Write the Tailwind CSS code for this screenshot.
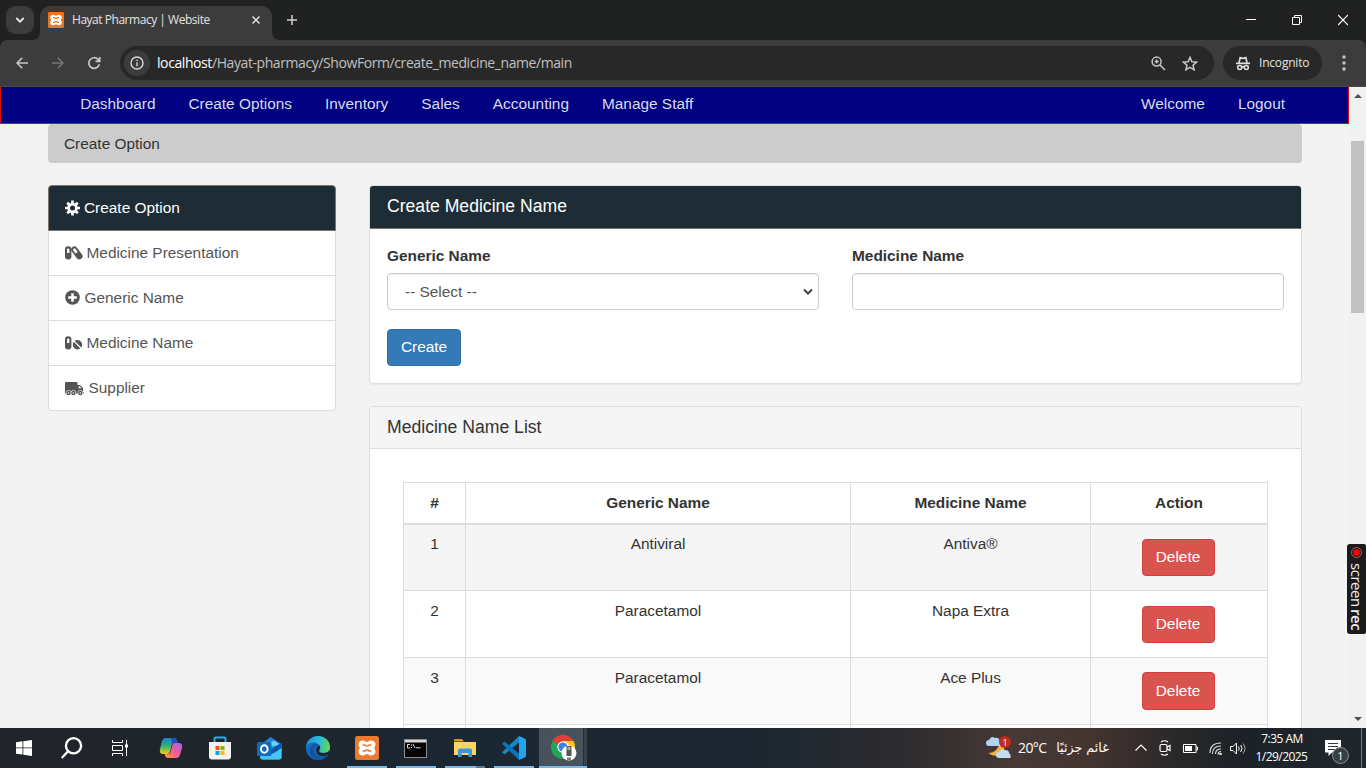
<!DOCTYPE html>
<html lang="en">
<head>
<meta charset="utf-8">
<title>Hayat Pharmacy | Website</title>
<script src="https://cdn.jsdelivr.net/npm/@tailwindcss/browser@4"></script>
</head>
<body class="relative flex h-[768px] w-[1366px] flex-col overflow-hidden bg-[#f3f3f3] font-['Liberation_Sans',Arial,sans-serif] text-[15.4px] leading-[22px] text-[#333]">

<!-- Browser tab strip -->
<header class="h-[87px] shrink-0 bg-[#202221] font-['Open_Sans',sans-serif]">
  <div class="flex h-10 items-start">
    <div class="ml-1.5 mt-1.5 flex size-7 items-center justify-center rounded-[9px] bg-[#3c3c3c]">
      <svg width="10" height="10" viewBox="0 0 10 10" fill="none" stroke="#e8e8e8" stroke-width="1.8"><path d="M1.3 3l3.7 3.7L8.7 3"/></svg>
    </div>
    <div class="relative ml-1.5 mt-1.5 flex h-[34px] w-[232px] items-center rounded-t-[10px] bg-[#3c3c3c] pb-1.5 pl-2 pr-[11px]">
      <svg class="absolute -left-2 bottom-0" width="8" height="8"><path d="M8 0v8H0Q8 8 8 0" fill="#3c3c3c"/></svg>
      <svg class="absolute -right-2 bottom-0" width="8" height="8"><path d="M0 0v8h8Q0 8 0 0" fill="#3c3c3c"/></svg>
      <svg width="16" height="16" viewBox="0 0 24 24"><rect width="24" height="24" rx="2" fill="#ee7320"/><path d="M8 4c-5 0-6 5-3 8-3 3-2 8 3 8 2 0 2.500-1.500 4-1.500s2 1.500 4 1.500c5 0 6-5 3-8 3-3 2-8-3-8-2 0-2.500 1.500-4 1.500S10 4 8 4z" fill="#fff"/><path d="M7.500 8.500h1.500q2.300 0 2.300 2v3q0 2-2.300 2H7.500M16.500 8.500H15q-2.300 0-2.300 2v3q0 2 2.300 2h1.500" fill="none" stroke="#ee7320" stroke-width="1.800"/><path d="M10 12h4" stroke="#fff" stroke-width="2.500"/></svg>
      <span class="ml-2 whitespace-nowrap text-[12px] tracking-[-0.47px] text-[#e3e3e3]">Hayat Pharmacy | Website</span>
      <svg class="ml-auto" width="10" height="10" viewBox="0 0 10 10" stroke="#e0e0e0" stroke-width="1.5"><path d="M1.500 1.500l7 7M8.500 1.500l-7 7"/></svg>
    </div>
    <svg class="ml-[15px] mt-[15px]" width="10" height="10" viewBox="0 0 10 10" stroke="#d0d0d0" stroke-width="1.5"><path d="M0 5h10M5 0v10"/></svg>
    <div class="ml-auto mt-[14px] flex items-center">
      <svg class="mr-[36px]" width="10" height="12"><path d="M0 5.500h10" stroke="#fff"/></svg>
      <svg class="mr-[36px]" width="10" height="12" viewBox="0 0 10 12" fill="none" stroke="#fff"><path d="M.5 3.500h7v7h-7zM2.500 3.500v-2h7v7h-2"/></svg>
      <svg class="mr-[18px]" width="10" height="12" viewBox="0 0 10 12" stroke="#fff" stroke-width="1.200"><path d="M0 1l10 10M10 1L0 11"/></svg>
    </div>
  </div>
  <!-- Toolbar -->
  <div class="flex h-[47px] items-center rounded-t-[8px] border-b border-[#494949] bg-[#3c3c3c]">
    <svg class="ml-4" width="12" height="12" viewBox="0 0 12 12" fill="none" stroke="#c7c7c7" stroke-width="1.6"><path d="M12 6H1M6.200 .7L1 6l5.200 5.300"/></svg>
    <svg class="ml-6" width="12" height="12" viewBox="0 0 12 12" fill="none" stroke="#777" stroke-width="1.6"><path d="M0 6h11M5.800 .7L11 6l-5.200 5.300"/></svg>
    <svg class="ml-[23px]" width="14" height="14" viewBox="0 0 14 14" fill="none" stroke="#c7c7c7" stroke-width="1.700"><path d="M12.300 8.200A5.300 5.300 0 1 1 11 3.400l1.500 1.700M12.700 1v4.300H8.500"/></svg>
    <div class="ml-[19px] flex h-[34px] w-[1094px] items-center rounded-full bg-[#282828]">
      <div class="ml-1 flex size-[26px] items-center justify-center rounded-full bg-[#3c3c3c]">
        <svg width="14" height="14" viewBox="0 0 14 14" fill="none" stroke="#d5d5d5" stroke-width="1.400"><circle cx="7" cy="7" r="6"/><path d="M7 6.200v4M7 3.700v1.400"/></svg>
      </div>
      <span class="ml-[7px] whitespace-nowrap text-[14px] tracking-[-0.415px] text-[#c0c0c0]"><span class="text-white">localhost</span>/Hayat-pharmacy/ShowForm/create_medicine_name/main</span>
      <svg class="ml-auto" width="15" height="15" viewBox="0 0 15 15" fill="none" stroke="#c7c7c7" stroke-width="1.500"><circle cx="5.600" cy="5.600" r="4.500"/><path d="M9 9l5 5M3.600 5.600h4M5.600 3.600v4"/></svg>
      <svg class="ml-4 mr-4" width="16" height="15" viewBox="0 0 16 15" fill="none" stroke="#c7c7c7" stroke-width="1.500"><path d="M8 1.400l1.900 4.300 4.700.4-3.600 3.100 1.100 4.600L8 11.400l-4.100 2.400L5 9.200 1.400 6.100l4.700-.4z"/></svg>
    </div>
    <div class="ml-[9px] flex h-[34px] w-[99px] items-center rounded-full bg-[#282828] pl-3">
      <svg width="16" height="15" viewBox="0 0 16 15" fill="none" stroke="#e0e0e0" stroke-width="1.600"><path d="M1 7.400h14M4 6.500l1.200-5 2.800.9 2.800-.9 1.200 5"/><circle cx="4.700" cy="11.500" r="2"/><circle cx="11.300" cy="11.500" r="2"/><path d="M6.700 11q1.300-.7 2.600 0"/></svg>
      <span class="ml-2 text-[12px] text-[#e3e3e3] tracking-[-0.2px]">Incognito</span>
    </div>
    <svg class="ml-5" width="4" height="16" fill="#c7c7c7"><circle cx="2" cy="2" r="1.700"/><circle cx="2" cy="8" r="1.700"/><circle cx="2" cy="14" r="1.700"/></svg>
  </div>
</header>

<!-- Page -->
<div class="flex h-[641px] shrink-0">
  <main class="h-full w-[1349px] overflow-hidden">
    <nav class="flex h-[37px] border border-t-0 border-[#e00a0a] bg-[#000080] pb-[2px] text-[#d6dcea]">
      <div class="flex items-center gap-[33px] pl-[79.200px]">
        <a>Dashboard</a><a>Create Options</a><a>Inventory</a><a>Sales</a><a>Accounting</a><a>Manage Staff</a>
      </div>
      <div class="ml-auto flex items-center gap-[33px] pr-[63px]"><a>Welcome</a><a>Logout</a></div>
    </nav>
    <div class="ml-12 flex h-[39px] w-[1254px] items-center rounded-[4px] bg-[#ccc] pl-4"><span class="pt-px">Create Option</span></div>

    <div class="ml-12 mt-[22px] flex gap-[33px]">
      <!-- Side menu -->
      <aside class="h-[226px] w-[288px] shrink-0 rounded-[4px] text-[#555]">
        <div class="flex h-[46px] items-center gap-1 rounded-t-[4px] border border-[#7d7469] bg-[#1e2d35] pl-4 text-white">
          <svg width="15" height="16" viewBox="0 0 16 16" fill="none" stroke="#fff"><circle cx="8" cy="8" r="4.200" stroke-width="3"/><path d="M8 0v3.500M8 12.500V16M0 8h3.500M12.500 8H16M2.350 2.350l2.500 2.500M11.150 11.150l2.500 2.500M13.650 2.350l-2.500 2.500M4.850 11.150l-2.500 2.500" stroke-width="2.900"/></svg>
          <span>Create Option</span>
        </div>
        <div class="flex h-[45px] items-center gap-1 border border-t-0 border-[#ddd] bg-white pl-4">
          <svg width="17.500" height="14" viewBox="0 0 17.500 14"><rect x="0" y=".3" width="6.400" height="13.200" rx="3.200" fill="#555"/><path d="M2 3.600a1.200 1.200 0 0 1 2.400 0V7H2z" fill="#fff"/><g transform="rotate(-37 11.800 7)"><rect x="8.700" y="-.3" width="6.400" height="14.600" rx="3.200" fill="#555"/><path d="M10.500 3a1.350 1.350 0 0 1 2.700 0v3.700h-2.700z" fill="#fff"/></g></svg>
          <span>Medicine Presentation</span>
        </div>
        <div class="flex h-[45px] items-center gap-1 border border-t-0 border-[#ddd] bg-white pl-4">
          <svg width="15.500" height="16" viewBox="0 0 15.500 16"><circle cx="7.500" cy="7.500" r="7.300" fill="#555"/><path d="M7.500 3.200v8.600M3.200 7.500h8.600" stroke="#fff" stroke-width="2.500"/></svg>
          <span>Generic Name</span>
        </div>
        <div class="flex h-[45px] items-center gap-1 border border-t-0 border-[#ddd] bg-white pl-4">
          <svg width="17.500" height="14" viewBox="0 0 17.500 14"><rect y=".3" width="6.400" height="13.200" rx="3.200" fill="#555"/><path d="M2 3.600a1.200 1.200 0 0 1 2.400 0V7H2z" fill="#fff"/><circle cx="12.500" cy="8.700" r="4.700" fill="#555"/><path d="M8.700 4.900l7.600 7.600" stroke="#fff" stroke-width="1.300"/></svg>
          <span>Medicine Name</span>
        </div>
        <div class="flex h-[45px] items-center gap-1 rounded-b-[4px] border border-t-0 border-[#ddd] bg-white pl-4">
          <svg width="19.500" height="15" viewBox="0 0 19.500 15"><path d="M0 2q0-1 1-1h10.500q1 0 1 1v2h2.500L18 7v4h.7v1.500H0z" fill="#555"/><path d="M13.700 5.300h1l1.900 1.900h-2.900z" fill="#fff"/><g fill="#fff"><circle cx="3.600" cy="12" r="2.700"/><circle cx="8.400" cy="12" r="2.700"/><circle cx="15.300" cy="12" r="2.700"/></g><g fill="#fff" stroke="#555" stroke-width="1.400"><circle cx="3.600" cy="12" r="1.500"/><circle cx="8.400" cy="12" r="1.500"/><circle cx="15.300" cy="12" r="1.500"/></g></svg>
          <span>Supplier</span>
        </div>
      </aside>

      <div class="w-[933px]">
        <!-- Create form -->
        <section class="h-[199px] rounded-[4px] border border-[#ddd] bg-white shadow-[0_1px_1px_rgba(0,0,0,.05)]">
          <div class="flex h-[43px] items-center rounded-t-[3px] border-b border-[#7d7469] bg-[#1e2d35] pl-[17px] text-[17.600px] text-white"><h3 class="-mt-0.5">Create Medicine Name</h3></div>
          <div class="grid grid-cols-2 gap-x-[33px] px-[17px] pt-4">
            <div>
              <label class="block font-bold">Generic Name</label>
              <div class="mt-[6px] flex h-[37px] items-center justify-between rounded-[4px] border border-[#ccc] pl-[17px] pr-[5px] text-[#555] shadow-[inset_0_1px_1px_rgba(0,0,0,.075)]">
                <span>-- Select --</span>
                <svg width="10" height="8" viewBox="0 0 10 8" fill="none" stroke="#444" stroke-width="2"><path d="M1 1.500l4 4 4-4"/></svg>
              </div>
            </div>
            <div>
              <label class="block font-bold">Medicine Name</label>
              <div class="mt-[6px] h-[37px] rounded-[4px] border border-[#ccc] shadow-[inset_0_1px_1px_rgba(0,0,0,.075)]"></div>
            </div>
          </div>
          <button class="ml-[17px] mt-[19px] flex h-[37px] w-[74px] items-center justify-center rounded-[4px] border border-[#2e6da4] bg-[#337ab7] pb-px text-white">Create</button>
        </section>

        <!-- List -->
        <section class="mt-[22px] h-[500px] rounded-[4px] border border-[#ddd] bg-white">
          <div class="flex h-[42px] items-center rounded-t-[3px] border-b border-[#ddd] bg-[#f5f5f5] pl-[17px] text-[17.600px]"><h3 class="-mt-px">Medicine Name List</h3></div>
          <div class="ml-[33px] mt-[33px] w-[865px] border-l border-t border-[#ddd] text-center [&>div]:grid [&>div]:grid-cols-[62px_385px_240px_177px] [&>div>div]:border-b [&>div>div]:border-r [&>div>div]:border-[#ddd]">
            <div class="h-[42px] border-b border-[#ddd] font-bold [&>div]:pt-[9px]"><div>#</div><div>Generic Name</div><div>Medicine Name</div><div>Action</div></div>
            <div class="h-[66px] bg-[#f5f5f5] [&>div]:pt-2"><div>1</div><div>Antiviral</div><div>Antiva®</div><div class="flex justify-center pr-[2px]"><button class="mt-[6px] h-[37px] w-[73px] rounded-[4px] border border-[#d43f3a] bg-[#d9534f] pb-px text-white">Delete</button></div></div>
            <div class="h-[67px] bg-white [&>div]:pt-[9px]"><div>2</div><div>Paracetamol</div><div>Napa Extra</div><div class="flex justify-center pr-[2px]"><button class="mt-[6px] h-[37px] w-[73px] rounded-[4px] border border-[#d43f3a] bg-[#d9534f] pb-px text-white">Delete</button></div></div>
            <div class="h-[67px] bg-[#f9f9f9] [&>div]:pt-[9px]"><div>3</div><div>Paracetamol</div><div>Ace Plus</div><div class="flex justify-center pr-[2px]"><button class="mt-[5px] h-[38px] w-[73px] rounded-[4px] border border-[#d43f3a] bg-[#d9534f] text-white">Delete</button></div></div>
            <div class="h-[67px] bg-white"><div></div><div></div><div></div><div></div></div>
          </div>
        </section>
      </div>
    </div>
  </main>
  <!-- Scrollbar -->
  <div class="flex w-[17px] flex-col items-center bg-[#f1f1f1]">
    <svg class="mt-[7px] shrink-0" width="8" height="4"><path d="M0 4l4-4 4 4z" fill="#505050"/></svg>
    <div class="mt-[43px] h-[172px] w-[13px] shrink-0 bg-[#c1c1c1]"></div>
    <svg class="mb-[7px] mt-auto shrink-0" width="8" height="4"><path d="M0 0l4 4 4-4z" fill="#505050"/></svg>
  </div>
</div>

<!-- Screen recorder handle, docked over the window edge -->
<div class="absolute left-[1347px] top-[544px] flex h-[90px] w-[19px] flex-col items-center rounded-l-[3px] rounded-r-[2px] bg-[#1b1b1b] pt-[3px] font-['Open_Sans',sans-serif]">
  <svg class="shrink-0" width="11" height="11"><circle cx="5.500" cy="5.500" r="5" fill="none" stroke="#b55"/><circle cx="5.500" cy="5.500" r="3.300" fill="#f00"/></svg>
  <span class="mt-[5px] flex gap-[2px] whitespace-nowrap text-[15px] leading-[19px] text-[#eee] tracking-[-0.450px] [writing-mode:vertical-rl]"><span>screen</span><span class="font-semibold">rec</span></span>
</div>

<!-- Taskbar -->
<footer class="flex h-10 shrink-0 bg-[linear-gradient(90deg,#21252b_0%,#1f252b_20%,#1b2733_32%,#1c2731_56%,#2d2b2e_66%,#463936_74%,#43342f_80%,#2a2829_86%,#1c2228_91%,#20272b_100%)] font-['Open_Sans','Noto_Sans',sans-serif] text-white">
  <div class="flex items-center [&>div]:flex [&>div]:h-10 [&>div]:w-[49px] [&>div]:items-center [&>div]:justify-center">
    <div class="pr-px"><svg width="16" height="16" viewBox="0 0 16 16" fill="#fff"><path d="M0 2.200L6.500 1.300v6.200H0zM7.300 1.200L16 0v7.500H7.300zM0 8.300h6.500v6.300L0 13.700zM7.300 8.300H16V16l-8.700-1.200z"/></svg></div>
    <div class="pr-1"><svg width="22" height="22" viewBox="0 0 22 22" fill="none" stroke="#fff" stroke-width="2.300"><circle cx="12.500" cy="8.800" r="7.600"/><path d="M7 14.200L.8 21"/></svg></div>
    <div class="pr-[6px]"><svg width="18" height="16" viewBox="0 0 18 16" fill="none" stroke="#fff"><path d="M1.500 0v2.500h10V0M1.500 5.500h10v5h-10zM1.500 16v-2.500h10V16M15.500 0v16"/><path d="M14 4.500h3v3h-3z" fill="#fff" stroke="none"/></svg></div>
    <div class="pr-[2px]"><svg width="24" height="22" viewBox="0 0 24 22"><defs><linearGradient id="c1" x1="0" y1="0" x2="0" y2="1"><stop stop-color="#1d7fe0"/><stop offset=".5" stop-color="#2fb46e"/><stop offset="1" stop-color="#f4c91f"/></linearGradient><linearGradient id="c2" x1="1" y1="0" x2="0" y2="1"><stop stop-color="#a262ec"/><stop offset=".5" stop-color="#ee5b93"/><stop offset="1" stop-color="#ff9a44"/></linearGradient></defs><path d="M6 1h9q2.500 0 3.200 3l.6 2h-3.500q-2 0-2.700 2.500l-1.300 5Q10.500 17 8 17H4q-4 0-3-5L3 4q.9-3 3-3z" fill="url(#c1)"/><path d="M18 21H9q-2.500 0-3-3l-.3-1H9q2 0 2.600-2.500l1.400-5Q13.800 6 16 6h4q4 0 3 5l-2 7q-1 3-3 3z" fill="url(#c2)"/><path d="M12 1h3q2.500 0 3.200 3l.6 2h-3.500q-1.500 0-2.300 1.500z" fill="#214fc4"/></svg></div>
    <div class="pr-[2px]"><svg width="24" height="24" viewBox="0 0 24 24"><path d="M6.500 8V3q0-1.500 1.500-1.500h8q1.500 0 1.500 1.500v5" fill="none" stroke="#2aaee8" stroke-width="2"/><path d="M1 6h22v14.500q0 3-3 3H4q-3 0-3-3z" fill="#f2f2f2"/><path d="M7.500 10h4v4h-4z" fill="#f25022"/><path d="M12.500 10h4v4h-4z" fill="#7fba00"/><path d="M7.500 15h4v4h-4z" fill="#00a4ef"/><path d="M12.500 15h4v4h-4z" fill="#ffb900"/></svg></div>
    <div class="pr-px"><svg width="25" height="23" viewBox="0 0 25 23"><path d="M3 8L13.500 0 24.500 7v8H3z" fill="#1c86dc"/><path d="M9 8l8-4.500 5 3.500-8 6z" fill="#72d1f5"/><path d="M24.500 8v12q0 2.500-2.500 2.500H5.500Q3 22.500 3 20V10z" fill="#28a4ea"/><path d="M24.500 6v6L14 19V12z" fill="#0d55a6"/><path d="M3 19q10 1 21.500-8v9q0 2.500-2.500 2.500H6Q3 22.500 3 20z" fill="#42c8f5"/><rect y="5" width="14.500" height="14" rx="1.500" fill="#0f6cbd"/><ellipse cx="7.300" cy="12" rx="3.300" ry="3.700" fill="none" stroke="#fff" stroke-width="2"/></svg></div>
    <div class="pr-[2px]"><svg width="24" height="24" viewBox="0 0 24 24"><defs><linearGradient id="e1" x1="0" y1=".3" x2="1" y2=".4"><stop stop-color="#1a93df"/><stop offset=".55" stop-color="#29bcd7"/><stop offset="1" stop-color="#65db4b"/></linearGradient></defs><circle cx="12" cy="12" r="12" fill="#126ac1"/><path d="M0 11C1 4 6 0 12 0c7 0 12 5 12 11 0 4-3 6-6.500 6-3 0-4.500-1-4.500-2 0-.8 1.200-1.200 1.200-3.500C14.200 8.500 11 6.500 7.500 6.500 4 6.500 1 8.500 0 11z" fill="url(#e1)"/><path d="M8 14c0-3 2-5 4.500-5.500C9 7 4 9 3.500 15c-.2 4 3.500 8 8 9 4 0 8-1.500 10.500-5.500-5 3.500-14 2.500-14-4.500z" fill="#1552a5"/><path d="M14.200 11.500c0 2-1.200 2.700-1.200 3.500 0 1 1.500 2 4.500 2 2 0 4.500-.7 6-2.500.5 1-.5 3-1.500 4-5 3-12 1.500-12-4.500 0-2 1.500-4 3-4.500.8.500 1.200 1 1.200 2z" fill="#1e262e"/></svg></div>
    <div class="relative pr-px"><svg width="24" height="24" viewBox="0 0 24 24"><rect width="24" height="24" rx="2.500" fill="#ee7a30"/><path d="M8 4.500c-5 0-5.500 4.700-3 7.500-2.500 2.800-2 7.500 3 7.500 2 0 2.500-1.500 4-1.500s2 1.500 4 1.500c5 0 5.500-4.700 3-7.500 2.500-2.800 2-7.500-3-7.500-2 0-2.500 1.500-4 1.500s-2-1.500-4-1.500z" fill="#fff"/><path d="M7.500 9H9q2.300 0 2.300 2v2q0 2-2.300 2H7.500M16.500 9H15q-2.300 0-2.300 2v2q0 2 2.300 2h1.500" fill="none" stroke="#ee7a30" stroke-width="1.700"/><path d="M10 12h4" stroke="#fff" stroke-width="2.600"/></svg><i class="absolute bottom-0 left-[4px] h-[2px] w-10 bg-[#76b9ed]"></i></div>
    <div class="relative pr-[2px]"><svg width="23" height="19" viewBox="0 0 23 19"><rect x=".5" y=".5" width="22" height="18" fill="#050505" stroke="#8b8b8b"/><path d="M1 1h21v2.500H1z" fill="#d8d8d8"/><path d="M6 5.500H3.500v3.500H6M7.500 5.500v1M7.500 8v1M9 5l2 4M12 8.800h4.500" stroke="#ddd" fill="none"/></svg><i class="absolute bottom-0 left-[4px] h-[2px] w-10 bg-[#76b9ed]"></i></div>
    <div class="relative pr-px"><svg width="22" height="19" viewBox="0 0 22 19"><path d="M0 1q0-1 1-1h7l2 2.500H0z" fill="#d59a10"/><path d="M0 3h22v13H0z" fill="#fcd462"/><path d="M4 18V11.500q0-2 2-2h10q2 0 2 2V18h-3.500v-4h-7v4z" fill="#3c96dc"/></svg><i class="absolute bottom-0 left-[4px] h-[2px] w-[31px] bg-[#76b9ed]"></i><i class="absolute bottom-0 left-[35px] h-[2px] w-[9px] bg-[#527b9e]"></i></div>
    <div class="relative pr-[2px]"><svg width="24" height="24" viewBox="0 0 24 24"><path d="M17 0l6 2.800q1 .5 1 1.500v15.400q0 1-1 1.500L17 24z" fill="#24a4ef"/><path d="M17 0v6.500L2.500 18.500 0 16.300z" fill="#1687ce"/><path d="M17 24v-6.500L2.500 5.500 0 7.700z" fill="#0b72b8"/></svg><i class="absolute bottom-0 left-[4px] h-[2px] w-10 bg-[#76b9ed]"></i></div>
    <div class="relative bg-[#48525c] !w-[44px]"><svg width="26" height="26" viewBox="0 0 26 26" class="ml-1.5"><circle cx="12" cy="12" r="12" fill="#23a455"/><path d="M12 12L1.600 6A12 12 0 0 1 22.400 6z" fill="#e53e31"/><path d="M12 12V6h10.400A12 12 0 0 1 12 24l5-9z" fill="#fdc522"/><circle cx="12" cy="12" r="5.800" fill="#fff"/><circle cx="12" cy="12" r="4.600" fill="#3f80e5"/><circle cx="18" cy="18" r="7.500" fill="#fff"/><path d="M15.500 11h5v10h-5z" fill="#555"/><circle cx="18" cy="13.500" r="1.700" fill="#b9a8a0"/><path d="M16 22.500h4v2.500h-4z" fill="#88776f"/></svg><i class="absolute bottom-0 left-0 h-[2px] w-[48px] bg-[#76b9ed]"></i></div>
    <div class="!w-[4px] border-l border-[#252e36] bg-[#37424b]"></div>
  </div>

  <div class="ml-auto flex items-center">
    <div class="relative h-[24px] w-[25px]">
      <svg width="25" height="24" viewBox="0 0 25 24"><path d="M14 3a9 9 0 1 1-11.500 13.500C9 18 14 11 14 3z" fill="#f7b03c"/><path d="M3 10a3 3 0 0 1 0-6Q5-.5 9 2q4-1 4.500 3 2 1 1 5z" fill="#b4d2f4"/><path d="M13 22a3 3 0 0 1 0-6q2-4 6-2 4 0 4 3 2 1 1.500 5z" fill="#c4dbf5"/></svg>
      <span class="absolute right-0 top-0 flex size-3 items-center justify-center rounded-full bg-[#c42b1c] text-[9px] leading-none">1</span>
    </div>
    <span class="ml-[7px] w-[38px] whitespace-nowrap text-[14px] tracking-[-0.6px]">20°C</span>
    <span dir="rtl" class="w-[53px] whitespace-nowrap text-center font-['DejaVu_Sans'] text-[12.700px] tracking-normal">غائم جزئيًا</span>
    <svg class="ml-[26px]" width="12" height="8" viewBox="0 0 12 8" fill="none" stroke="#fff" stroke-width="1.200"><path d="M.5 6.500L6 1l5.500 5.500"/></svg>
    <svg class="ml-3" width="12" height="16" viewBox="0 0 12 16" fill="none" stroke="#fff" stroke-width="1.200"><rect x="1" y="4.500" width="7" height="7" rx="1.500"/><path d="M8 7l3-1.500v5L8 9M2 2Q5.500-.5 9 2M2 14q3.500 2.500 7 0"/></svg>
    <svg class="ml-3" width="15" height="9" viewBox="0 0 15 9" fill="none" stroke="#fff"><path d="M.5.500h12.500v8H.5zM13 3h1.500v3H13"/><path d="M2 2h7v5H2z" fill="#fff" stroke="none"/></svg>
    <svg class="ml-[11px]" width="13" height="13" viewBox="0 0 13 13" fill="none" stroke="#ddd" stroke-width="1.100"><path d="M1 11Q1 1 12 1M3.500 12Q3.500 4 12 4M6.500 12Q6.500 7 12 7M9 12.500q0-3 3-3"/><circle cx="11.500" cy="12" r=".8" fill="#fff"/></svg>
    <svg class="ml-2" width="16" height="13" viewBox="0 0 16 13" fill="none" stroke="#fff"><path d="M.5 4.500h2.500l3.500-3.500v11L3 8.500H.5zM8.500 4.500q1.500 2 0 4M10.700 3q2.600 3.500 0 7"/><path d="M13 1.500q4 5 0 10" stroke="#aaa"/></svg>
    <div class="ml-[8px] w-[56px] text-center text-[12px] leading-[18px] tracking-[-0.55px]"><div class="whitespace-nowrap">7:35 AM</div><div class="-ml-px whitespace-nowrap">1/29/2025</div></div>
    <div class="relative ml-[15px] mr-[12px] h-[24px] w-6">
      <svg class="mt-[4px]" width="16" height="16" viewBox="0 0 16 16"><path d="M0 0h16v12.500H7L3.500 16v-3.500H0z" fill="#fff"/><path d="M3 3.500h10M3 6.500h10M3 9.500h7" stroke="#333a3e"/></svg>
      <span class="absolute left-[7px] top-[11px] flex size-[17px] items-center justify-center rounded-full border border-[#8b8f92] bg-[#3a3f43] text-[11px] leading-none">1</span>
    </div>
    <i class="mr-[4px] h-10 w-px bg-[#737a7e]"></i>
  </div>
</footer>
</body>
</html>
